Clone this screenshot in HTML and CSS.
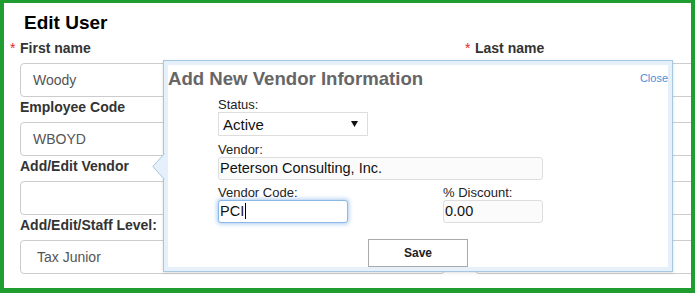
FILE: index.html
```html
<!DOCTYPE html>
<html lang="en">
<head>
    <meta charset="UTF-8">
    <title>Edit User</title>
    <link rel="stylesheet" href="styles.css">
</head>
<body>
<div class="frame">
    <h2 class="page-title">Edit User</h2>

    <div class="user-form">
        <div class="field">
            <label class="field-label"><span class="req">*</span>First name</label>
            <div class="text-box">Woody</div>
        </div>
        <div class="field">
            <label class="field-label"><span class="req">*</span>Last name</label>
            <div class="text-box">Woodward</div>
        </div>
        <div class="field">
            <label class="field-label">Employee Code</label>
            <div class="text-box">WBOYD</div>
        </div>
        <div class="field">
            <label class="field-label">Email</label>
            <div class="text-box"></div>
        </div>
        <div class="field">
            <label class="field-label">Add/Edit Vendor</label>
            <div class="text-box"></div>
        </div>
        <div class="field">
            <label class="field-label">Phone</label>
            <div class="text-box"></div>
        </div>
        <div class="field">
            <label class="field-label">Add/Edit/Staff Level:</label>
            <div class="text-box select-like">Tax Junior</div>
        </div>
        <div class="field">
            <label class="field-label">Office</label>
            <div class="text-box"></div>
        </div>
    </div>

    <!-- popup over the form -->
    <div class="vendor-popup">
        <svg class="popup-pointer" width="13" height="27" viewBox="0 0 13 27">
            <polygon points="13,0 0.5,13.5 13,27" fill="#e6f0fa"/>
            <path d="M12.5,0.5 L0.8,13.5 L12.5,26.5" fill="none" stroke="#a7c6df" stroke-width="1"/>
        </svg>
        <div class="popup-body">
            <div class="popup-head">
                <h3 class="popup-title">Add New Vendor Information</h3>
                <a class="close-link" href="#">Close</a>
            </div>

            <div class="vendor-form">
                <label class="form-label">Status:</label>
                <div class="select-box">
                    <span>Active</span>
                    <svg width="7" height="6" viewBox="0 0 7 6"><polygon points="0,0 7,0 3.5,6" fill="#111"/></svg>
                </div>

                <label class="form-label">Vendor:</label>
                <div class="input-box vendor-input">Peterson Consulting, Inc.</div>

                <div class="split-row">
                    <div class="split-col">
                        <label class="form-label">Vendor Code:</label>
                        <div class="input-box code-input">PCI<span class="caret"></span></div>
                    </div>
                    <div class="split-col">
                        <label class="form-label">% Discount:</label>
                        <div class="input-box discount-input">0.00</div>
                    </div>
                </div>
            </div>

            <div class="save-row">
                <button class="save-btn">Save</button>
            </div>
        </div>
    </div>
</div>
</body>
</html>
```

FILE: styles.css
```css
* {
    box-sizing: border-box;
}
body {
    margin: 0;
    font-family: "Liberation Sans", Arial, sans-serif;
    background: #fff;
}

/* ========== page frame ========== */
.frame {
    position: relative;
    width: 695px;
    height: 293px;
    border: solid #1f9d31;
    border-width: 3px 4px 5px 4px;
    padding: 9px 0 0 16px;
    overflow: hidden;
    background: #fff;
}
.page-title {
    margin: 0 0 4px 4px;
    font-size: 19px;
    line-height: 22px;
    font-weight: bold;
    color: #000;
}

/* ========== user form ========== */
.user-form {
    display: grid;
    grid-template-columns: 425px 425px;
    column-gap: 30px;
}
.field-label {
    display: block;
    margin-bottom: 6px;
    padding-top: 2px;
    font-size: 14px;
    line-height: 17px;
    font-weight: bold;
    color: #333;
    white-space: nowrap;
}
.req {
    display: inline-block;
    width: 10px;
    margin-left: -10px;
    font-weight: normal;
    color: #e8262c;
}
.text-box {
    height: 34px;
    padding: 0 12px;
    border: 1px solid #ccc;
    border-radius: 4px;
    font-size: 14px;
    line-height: 32px;
    color: #555;
}
.select-like {
    padding-left: 16px;
}

/* ========== vendor popup ========== */
.vendor-popup {
    position: absolute;
    left: 159px;
    top: 57px;
    width: 510px;
    height: 212px;
    padding: 4px;
    border: 1px solid #a7c6df;
    background: #e6f0fa;
    box-shadow: 0 1px 3px rgba(0, 0, 0, 0.12);
}
.popup-pointer {
    position: absolute;
    left: -12px;
    top: 92px;
}
.popup-body {
    height: 100%;
    padding-top: 3px;
    background: #fff;
}
.popup-head {
    display: flex;
    justify-content: space-between;
    align-items: flex-start;
}
.popup-title {
    margin: 0;
    font-size: 18.6px;
    line-height: 22px;
    font-weight: bold;
    color: #666;
}
.close-link {
    margin-top: 4px;
    font-size: 11px;
    line-height: 13px;
    color: #4a8fd8;
    text-decoration: none;
}

.vendor-form {
    margin: 8px 0 0 50px;
}
.form-label {
    display: block;
    font-size: 13px;
    line-height: 14px;
    color: #222;
}
.select-box {
    display: flex;
    align-items: center;
    justify-content: space-between;
    width: 150px;
    height: 24px;
    margin-bottom: 7px;
    padding: 0 9px 0 4px;
    border: 1px solid #ddd;
    background: #fff;
    font-size: 15px;
    color: #111;
}
.input-box {
    height: 23px;
    padding: 0 1px;
    border: 1px solid #ddd;
    border-radius: 3px;
    background: #fbfbfb;
    font-size: 14.5px;
    line-height: 21px;
    color: #111;
}
.vendor-input {
    width: 325px;
    margin-bottom: 6px;
}
.split-row {
    display: flex;
    gap: 95px;
}
.code-input {
    width: 130px;
    border-color: #8ab9e6;
    background: #fff;
    box-shadow: 0 0 4px 1px rgba(100, 160, 230, 0.55);
}
.discount-input {
    width: 100px;
}
.caret {
    display: inline-block;
    width: 1px;
    height: 16px;
    margin-left: 1px;
    vertical-align: -3px;
    background: #000;
}

.save-row {
    display: flex;
    justify-content: center;
    margin-top: 16px;
}
.save-btn {
    width: 100px;
    height: 28px;
    border: 1px solid #aaa;
    background: #fff;
    font-family: "Liberation Sans", Arial, sans-serif;
    font-size: 12px;
    font-weight: bold;
    color: #222;
    cursor: pointer;
}
```
